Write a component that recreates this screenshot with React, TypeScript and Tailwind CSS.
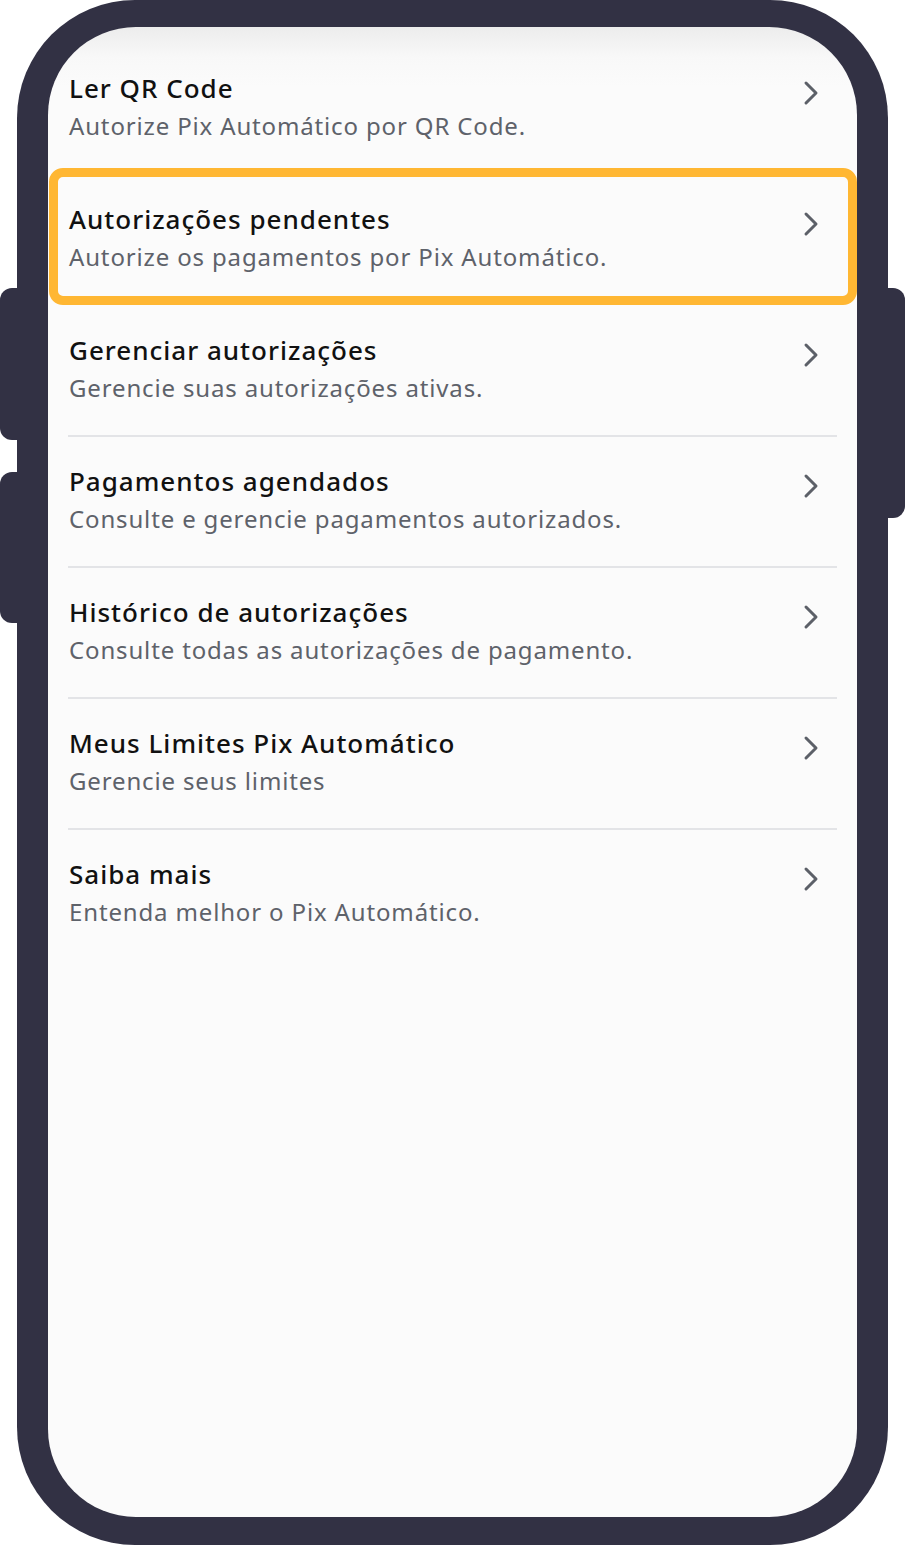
interface MenuItem {
  title: string;
  subtitle: string;
  highlight?: boolean;
  divider?: boolean;
}

const items: MenuItem[] = [
  { title: "Ler QR Code", subtitle: "Autorize Pix Automático por QR Code." },
  { title: "Autorizações pendentes", subtitle: "Autorize os pagamentos por Pix Automático.", highlight: true },
  { title: "Gerenciar autorizações", subtitle: "Gerencie suas autorizações ativas.", divider: true },
  { title: "Pagamentos agendados", subtitle: "Consulte e gerencie pagamentos autorizados.", divider: true },
  { title: "Histórico de autorizações", subtitle: "Consulte todas as autorizações de pagamento.", divider: true },
  { title: "Meus Limites Pix Automático", subtitle: "Gerencie seus limites", divider: true },
  { title: "Saiba mais", subtitle: "Entenda melhor o Pix Automático." },
];

function Chevron() {
  return (
    <svg width="16" height="26" viewBox="0 0 16 26" fill="none">
      <polyline
        points="3,3 13,13 3,23"
        stroke="#5c6068"
        strokeWidth="3"
        strokeLinecap="round"
        strokeLinejoin="round"
      />
    </svg>
  );
}

function Row({ item }: { item: MenuItem }) {
  return (
    <div className="relative h-[131px]">
      {/* highlight outline sits over the row */}
      {item.highlight && (
        <div className="absolute left-[1px] right-0 top-[-7px] bottom-[1px] rounded-[14px] border-[9px] border-[#ffb733] pointer-events-none" />
      )}
      <div className="flex h-full pl-[21px] pr-[38px]">
        <div className="flex-1 pt-[28px]">
          <div className="text-[26px] leading-[32px] font-medium tracking-[1px] text-[#111111]">
            {item.title}
          </div>
          <div className="mt-[6px] text-[24px] leading-[32px] tracking-[0.85px] text-[#5e626a]">
            {item.subtitle}
          </div>
        </div>
        <div className="pt-[36px]">
          <Chevron />
        </div>
      </div>
      {item.divider && <div className="mx-[20px] h-[2px] bg-[#e3e4e7] -mt-[2px]" />}
    </div>
  );
}

export default function App() {
  return (
    <div
      className="w-[906px] h-[1545px] bg-white flex"
      style={{ fontFamily: "'Noto Sans', Lato, sans-serif" }}
    >
      {/* left side buttons */}
      <div className="w-[17px] flex flex-col items-end">
        <div className="mt-[288px] w-[17px] h-[152px] rounded-l-[12px] bg-[#323144]" />
        <div className="mt-[32px] w-[17px] h-[151px] rounded-l-[12px] bg-[#323144]" />
      </div>

      {/* device frame */}
      <div className="w-[871px] h-[1545px] rounded-[118px] bg-[#323144] p-[31px] pt-[27px] pb-[28px]">
        <div className="w-full h-full rounded-[88px] overflow-hidden bg-[linear-gradient(to_bottom,#ececec_0px,#f8f8f8_30px,#fbfbfb_60px)] pt-[17px]">
          {items.map((item) => (
            <Row key={item.title} item={item} />
          ))}
        </div>
      </div>

      {/* right side button */}
      <div className="w-[18px] flex flex-col">
        <div className="mt-[288px] w-[17px] h-[230px] rounded-r-[12px] bg-[#323144]" />
      </div>
    </div>
  );
}
